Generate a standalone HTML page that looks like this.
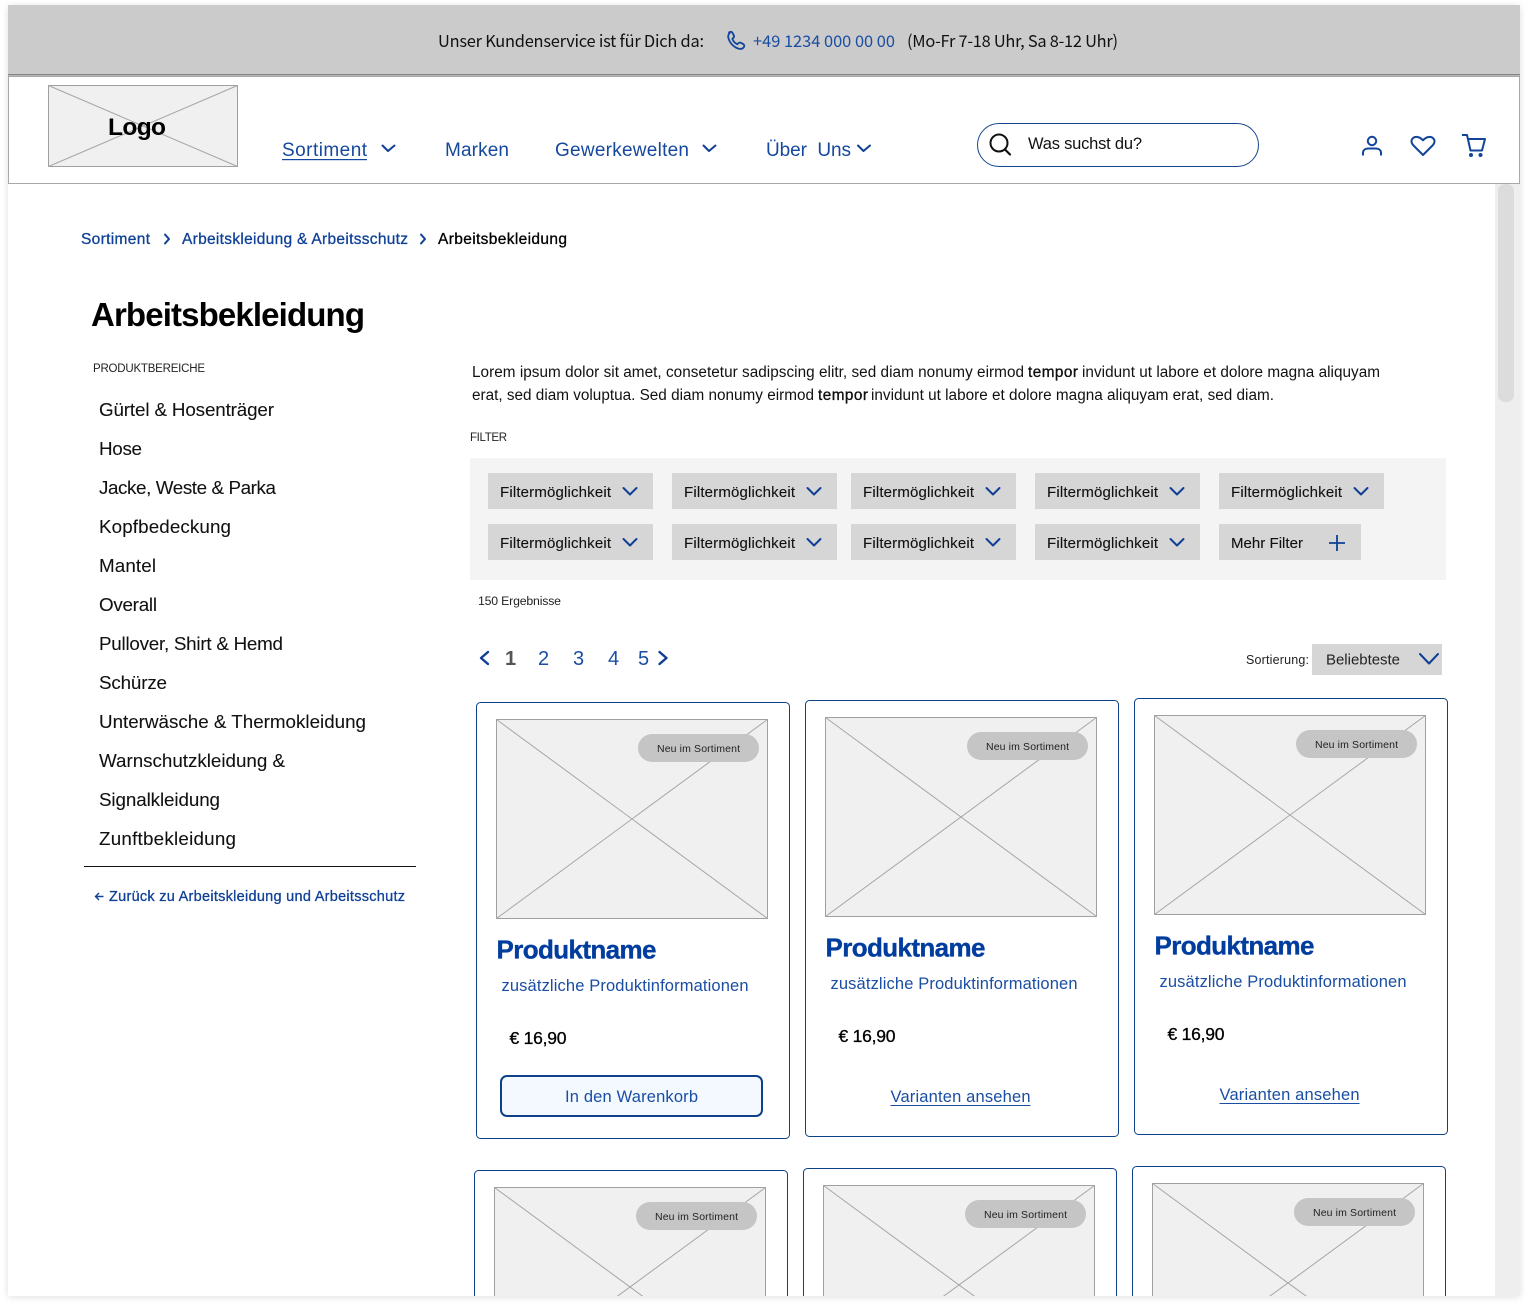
<!DOCTYPE html>
<html lang="de"><head><meta charset="utf-8"><title>Arbeitsbekleidung</title>
<style>
html,body{margin:0;padding:0;background:#fff;width:1528px;height:1307px;overflow:hidden}
#f{position:absolute;left:8px;top:5px;width:1512px;height:1291px;background:#fff;box-shadow:0 1px 7px rgba(0,0,0,.13)}
svg{position:absolute;left:0;top:0;display:block}
text{font-family:"Liberation Sans",sans-serif;white-space:pre}
.b{fill:#0f4197}
.bm{fill:#0f4197;stroke:#0f4197;stroke-width:.3}
.m{stroke:#000;stroke-width:.3}
.ch{fill:none;stroke:#0f3f95;stroke-width:2;stroke-linecap:round;stroke-linejoin:round}
.ph{fill:#f0f0f0;stroke:#a0a0a0;stroke-width:1}
.x{stroke:#a6a6a6;stroke-width:1;fill:none}
.card{fill:#fff;stroke:#0f4188;stroke-width:1}
.chip{fill:#d6d6d6}
.ft{font-size:15px;fill:#111;stroke:#111;stroke-width:.12}
.si{font-size:18.8px;fill:#111;stroke:#111;stroke-width:.08}
.bd{font-size:10.5px;fill:#222}
.nm{font-size:26px;font-weight:700;fill:#003d9e;stroke:#003d9e;stroke-width:.35}
.tb{font-family:"Noto Sans CJK SC","Liberation Sans",sans-serif;font-size:16.4px}
</style></head><body>
<div id="f"></div>
<svg width="1528" height="1307" viewBox="0 0 1528 1307" xmlns="http://www.w3.org/2000/svg">
<defs><clipPath id="c"><rect x="8" y="5" width="1512" height="1291"/></clipPath></defs>
<g clip-path="url(#c)">
<!-- top bar -->
<rect x="8" y="5" width="1512" height="69" fill="#cbcbcb"/>
<rect x="8" y="74" width="1512" height="1" fill="#858585"/>
<rect x="8" y="75" width="1512" height="1" fill="#b5b5b5"/>
<text x="438" y="47" class="tb" textLength="266" fill="#111">Unser Kundenservice ist für Dich da:</text>
<path d="M729 32.5c1.2-1 2.7-1 3.4.2l1.4 2.6c.5 1 .3 1.9-.5 2.6l-1 .9c.9 2.4 2.6 4.3 5 5.5l1-1c.8-.8 1.7-1 2.7-.5l2.4 1.4c1.1.7 1.2 2.2.2 3.3-1 1.1-2.4 1.7-3.9 1.4-5.5-1.1-10-5.6-11.400-11.200-.4-1.700.2-3.500 1.700-5.200z" fill="none" stroke="#12459a" stroke-width="1.8" stroke-linejoin="round"/>
<text x="753" y="47" class="tb" textLength="142" fill="#1a4ea3">+49 1234 000 00 00</text>
<text x="907" y="47" class="tb" textLength="211" fill="#111">(Mo-Fr 7-18 Uhr, Sa 8-12 Uhr)</text>

<!-- header -->
<rect x="8.5" y="76.5" width="1511" height="107" fill="#fff" stroke="#a8a8a8"/>
<rect x="48.5" y="85.5" width="189" height="81" class="ph"/>
<path d="M48.5 85.5L237.5 166.5M237.5 85.5L48.5 166.5" class="x"/>
<text x="108" y="135" font-size="24.5" font-weight="700" textLength="58" fill="#000">Logo</text>

<text x="282" y="156" font-size="19" textLength="85" fill="#15489c">Sortiment</text>
<rect x="282" y="159" width="85" height="1.2" fill="#15489c"/>
<path d="M382.5 145.5l5.5 5.500 6.500-5.500" class="ch"/>
<text x="445" y="156" font-size="19" textLength="64" fill="#15489c">Marken</text>
<text x="555" y="156" font-size="19" textLength="134" fill="#15489c">Gewerkewelten</text>
<path d="M703.5 145.5l5.5 5.500 6.500-5.500" class="ch"/>
<text x="766" y="156" font-size="19" textLength="85" fill="#15489c">Über  Uns</text>
<path d="M858 145.5l5.500 5.500 6.500-5.500" class="ch"/>

<rect x="977.5" y="123.5" width="281" height="43" rx="21.5" fill="#fff" stroke="#14468e"/>
<circle cx="999" cy="143" r="8.5" fill="none" stroke="#111" stroke-width="2"/>
<path d="M1005 149.5l5 5" stroke="#111" stroke-width="2.2" stroke-linecap="round"/>
<text x="1028" y="149" font-size="16.5" textLength="114" fill="#111">Was suchst du?</text>

<circle cx="1372" cy="141" r="4.2" fill="none" stroke="#12459a" stroke-width="2"/>
<path d="M1363 155.500v-2.500c0-3 2.200-4.500 5-4.500h8c2.800 0 5 1.500 5 4.500v2.500" fill="none" stroke="#12459a" stroke-width="2"/>
<path d="M1423 155l-9.500-9.500c-2.700-2.700-2.500-5.500-.6-7.300 2.300-2.100 6.500-1.900 10.100 2.100 3.600-4 7.800-4.200 10.100-2.100 1.900 1.800 2.100 4.600-.6 7.300z" fill="none" stroke="#12459a" stroke-width="2" stroke-linejoin="round"/>
<path d="M1462 135h5l3.500 15.500h11.500l3-11.500h-17.500" fill="none" stroke="#12459a" stroke-width="2" stroke-linejoin="round"/>
<circle cx="1471" cy="155" r="2" fill="#12459a"/><circle cx="1480.5" cy="155" r="2" fill="#12459a"/>

<!-- scrollbar -->
<rect x="1495" y="184" width="25" height="1112" fill="#eeeeee"/>
<rect x="1498" y="184" width="16" height="218" rx="7" fill="#dcdcdc"/>

<!-- breadcrumb -->
<text x="81" y="244" font-size="15.5" textLength="69" class="bm">Sortiment</text>
<path d="M165 234.5l4 4.5-4 4.5" class="ch"/>
<text x="182" y="244" font-size="15.5" textLength="226" class="bm">Arbeitskleidung &amp; Arbeitsschutz</text>
<path d="M421 234.5l4 4.5-4 4.5" class="ch"/>
<text x="438" y="244" font-size="15.5" textLength="129" fill="#000" class="m">Arbeitsbekleidung</text>

<text x="91" y="326" font-size="33" font-weight="700" textLength="274" fill="#000">Arbeitsbekleidung</text>
<text x="93" y="372" font-size="11.5" textLength="112" fill="#222">PRODUKTBEREICHE</text>

<!-- sidebar -->
<text class="si" x="99" y="416" textLength="175">Gürtel &amp; Hosenträger</text>
<text class="si" x="99" y="455" textLength="43">Hose</text>
<text class="si" x="99" y="494" textLength="177">Jacke, Weste &amp; Parka</text>
<text class="si" x="99" y="533" textLength="132">Kopfbedeckung</text>
<text class="si" x="99" y="572" textLength="57">Mantel</text>
<text class="si" x="99" y="611" textLength="58">Overall</text>
<text class="si" x="99" y="650" textLength="184">Pullover, Shirt &amp; Hemd</text>
<text class="si" x="99" y="689" textLength="68">Schürze</text>
<text class="si" x="99" y="728" textLength="267">Unterwäsche &amp; Thermokleidung</text>
<text class="si" x="99" y="767" textLength="186">Warnschutzkleidung &amp;</text>
<text class="si" x="99" y="806" textLength="121">Signalkleidung</text>
<text class="si" x="99" y="845" textLength="137">Zunftbekleidung</text>
<rect x="84" y="866" width="332" height="1" fill="#111"/>
<path d="M103.5 896.500h-8m3.500-3.500l-3.500 3.500 3.500 3.500" fill="none" stroke="#0f4197" stroke-width="1.4"/>
<text x="109" y="901" font-size="14.5" textLength="296" class="bm">Zurück zu Arbeitskleidung und Arbeitsschutz</text>

<!-- paragraph -->
<text x="472" y="377" font-size="15.3" textLength="552" fill="#111">Lorem ipsum dolor sit amet, consetetur sadipscing elitr, sed diam nonumy eirmod</text>
<text x="1028" y="377" font-size="15.3" textLength="50" fill="#111" class="m">tempor</text>
<text x="1082" y="377" font-size="15.3" textLength="298" fill="#111">invidunt ut labore et dolore magna aliquyam</text>
<text x="472" y="400" font-size="15.3" textLength="342" fill="#111">erat, sed diam voluptua. Sed diam nonumy eirmod</text>
<text x="818" y="400" font-size="15.3" textLength="50" fill="#111" class="m">tempor</text>
<text x="871" y="400" font-size="15.3" textLength="403" fill="#111">invidunt ut labore et dolore magna aliquyam erat, sed diam.</text>
<text x="470" y="441" font-size="11.5" textLength="37" fill="#222">FILTER</text>

<!-- filters -->
<rect x="470" y="458" width="976" height="122" fill="#f4f4f4"/>
<g>
<rect class="chip" x="488" y="473" width="165" height="36"/><text class="ft" x="500" y="497" textLength="111">Filtermöglichkeit</text><path class="ch" d="M623.5 488l6.5 6.5 6.5-6.5"/>
<rect class="chip" x="672" y="473" width="165" height="36"/><text class="ft" x="684" y="497" textLength="111">Filtermöglichkeit</text><path class="ch" d="M807.5 488l6.5 6.5 6.5-6.5"/>
<rect class="chip" x="851" y="473" width="165" height="36"/><text class="ft" x="863" y="497" textLength="111">Filtermöglichkeit</text><path class="ch" d="M986.5 488l6.5 6.5 6.5-6.5"/>
<rect class="chip" x="1035" y="473" width="165" height="36"/><text class="ft" x="1047" y="497" textLength="111">Filtermöglichkeit</text><path class="ch" d="M1170.5 488l6.5 6.5 6.5-6.5"/>
<rect class="chip" x="1219" y="473" width="165" height="36"/><text class="ft" x="1231" y="497" textLength="111">Filtermöglichkeit</text><path class="ch" d="M1354.5 488l6.5 6.5 6.5-6.5"/>
<rect class="chip" x="488" y="524" width="165" height="36"/><text class="ft" x="500" y="548" textLength="111">Filtermöglichkeit</text><path class="ch" d="M623.5 539l6.5 6.5 6.5-6.5"/>
<rect class="chip" x="672" y="524" width="165" height="36"/><text class="ft" x="684" y="548" textLength="111">Filtermöglichkeit</text><path class="ch" d="M807.5 539l6.5 6.5 6.5-6.5"/>
<rect class="chip" x="851" y="524" width="165" height="36"/><text class="ft" x="863" y="548" textLength="111">Filtermöglichkeit</text><path class="ch" d="M986.5 539l6.5 6.5 6.5-6.5"/>
<rect class="chip" x="1035" y="524" width="165" height="36"/><text class="ft" x="1047" y="548" textLength="111">Filtermöglichkeit</text><path class="ch" d="M1170.5 539l6.5 6.5 6.5-6.5"/>
<rect class="chip" x="1219" y="524" width="142" height="36"/><text class="ft" x="1231" y="548" textLength="72">Mehr Filter</text><path d="M1329 543h16M1337 535v16" fill="none" stroke="#0f3f95" stroke-width="1.8"/>
</g>
<text x="478" y="605" font-size="12.3" textLength="83" fill="#222">150 Ergebnisse</text>

<!-- pagination -->
<path class="ch" d="M488 652l-7 6 7 6" style="stroke-width:2.4"/>
<text x="505" y="665" font-size="20" font-weight="700" textLength="9" fill="#555">1</text>
<text x="538" y="665" font-size="20" fill="#1a4ea3">2</text>
<text x="573" y="665" font-size="20" fill="#1a4ea3">3</text>
<text x="608" y="665" font-size="20" fill="#1a4ea3">4</text>
<text x="638" y="665" font-size="20" fill="#1a4ea3">5</text>
<path class="ch" d="M659.500 652l7 6-7 6" style="stroke-width:2.4"/>

<text x="1246" y="664" font-size="12.5" textLength="63" fill="#222">Sortierung:</text>
<rect x="1312" y="644" width="130" height="31" fill="#d6d6d6"/>
<text x="1326" y="664.500" font-size="15" textLength="74" fill="#222">Beliebteste</text>
<path class="ch" d="M1420 654l9 9.5 9-9.5"/>

<!-- Card 1 -->
<g transform="translate(476 702)">
<rect class="card" x=".5" y=".5" width="313" height="436" rx="4"/>
<rect class="ph" x="20.5" y="17.5" width="271" height="199"/>
<path class="x" d="M20.5 17.5L291.5 216.5M291.5 17.5L20.5 216.5"/>
<rect x="162" y="32" width="121" height="28" rx="14" fill="#c6c5c5"/>
<text class="bd" x="181" y="50" textLength="83">Neu im Sortiment</text>
<text class="nm" x="20.5" y="256.500" textLength="160">Produktname</text>
<text x="25.5" y="289" font-size="16.5" textLength="247" fill="#1a4ea3">zusätzliche Produktinformationen</text>
<text x="33.5" y="342" font-size="17.5" textLength="57" fill="#000" class="m">€ 16,90</text>
<rect x="25" y="374" width="261" height="40" rx="6" fill="#f3f9ff" stroke="#0f4188" stroke-width="2"/>
<text x="89" y="400" font-size="16.5" textLength="133" fill="#1a4ea3">In den Warenkorb</text>
</g>
<!-- Card 2 -->
<g transform="translate(805 700)">
<rect class="card" x=".5" y=".5" width="313" height="436" rx="4"/>
<rect class="ph" x="20.5" y="17.5" width="271" height="199"/>
<path class="x" d="M20.5 17.5L291.5 216.5M291.5 17.5L20.5 216.5"/>
<rect x="162" y="32" width="121" height="28" rx="14" fill="#c6c5c5"/>
<text class="bd" x="181" y="50" textLength="83">Neu im Sortiment</text>
<text class="nm" x="20.5" y="256.500" textLength="160">Produktname</text>
<text x="25.5" y="289" font-size="16.5" textLength="247" fill="#1a4ea3">zusätzliche Produktinformationen</text>
<text x="33.5" y="342" font-size="17.5" textLength="57" fill="#000" class="m">€ 16,90</text>
<text x="85.5" y="402" font-size="16.5" textLength="140" fill="#1a4ea3">Varianten ansehen</text>
<rect x="85.5" y="405" width="140" height="1" fill="#1a4ea3"/>
</g>
<!-- Card 3 -->
<g transform="translate(1134 698)">
<rect class="card" x=".5" y=".5" width="313" height="436" rx="4"/>
<rect class="ph" x="20.5" y="17.5" width="271" height="199"/>
<path class="x" d="M20.5 17.5L291.5 216.5M291.5 17.5L20.5 216.5"/>
<rect x="162" y="32" width="121" height="28" rx="14" fill="#c6c5c5"/>
<text class="bd" x="181" y="50" textLength="83">Neu im Sortiment</text>
<text class="nm" x="20.5" y="256.500" textLength="160">Produktname</text>
<text x="25.5" y="289" font-size="16.5" textLength="247" fill="#1a4ea3">zusätzliche Produktinformationen</text>
<text x="33.5" y="342" font-size="17.5" textLength="57" fill="#000" class="m">€ 16,90</text>
<text x="85.5" y="402" font-size="16.5" textLength="140" fill="#1a4ea3">Varianten ansehen</text>
<rect x="85.5" y="405" width="140" height="1" fill="#1a4ea3"/>
</g>
<!-- Row 2 (cut off by the viewport) -->
<g transform="translate(474 1170)">
<rect class="card" x=".5" y=".5" width="313" height="130" rx="4"/>
<rect class="ph" x="20.5" y="17.5" width="271" height="120"/>
<path class="x" d="M20.5 17.5L155.600 116.700M291.500 17.500L156.400 116.700M155.600 116.700L184 137.500M156.400 116.700L128 137.500"/>
<rect x="162" y="32" width="121" height="28" rx="14" fill="#c6c5c5"/>
<text class="bd" x="181" y="50" textLength="83">Neu im Sortiment</text>
</g>
<g transform="translate(803 1168)">
<rect class="card" x=".5" y=".5" width="313" height="132" rx="4"/>
<rect class="ph" x="20.5" y="17.5" width="271" height="122"/>
<path class="x" d="M20.5 17.5L155.600 116.700M291.500 17.500L156.400 116.700M155.600 116.700L187 139.500M156.400 116.700L125 139.500"/>
<rect x="162" y="32" width="121" height="28" rx="14" fill="#c6c5c5"/>
<text class="bd" x="181" y="50" textLength="83">Neu im Sortiment</text>
</g>
<g transform="translate(1132 1166)">
<rect class="card" x=".5" y=".5" width="313" height="134" rx="4"/>
<rect class="ph" x="20.5" y="17.5" width="271" height="124"/>
<path class="x" d="M20.5 17.5L155.600 116.700M291.500 17.500L156.400 116.700M155.600 116.700L190 141.500M156.400 116.700L122 141.500"/>
<rect x="162" y="32" width="121" height="28" rx="14" fill="#c6c5c5"/>
<text class="bd" x="181" y="50" textLength="83">Neu im Sortiment</text>
</g>
</g>
</svg>
</body></html>
